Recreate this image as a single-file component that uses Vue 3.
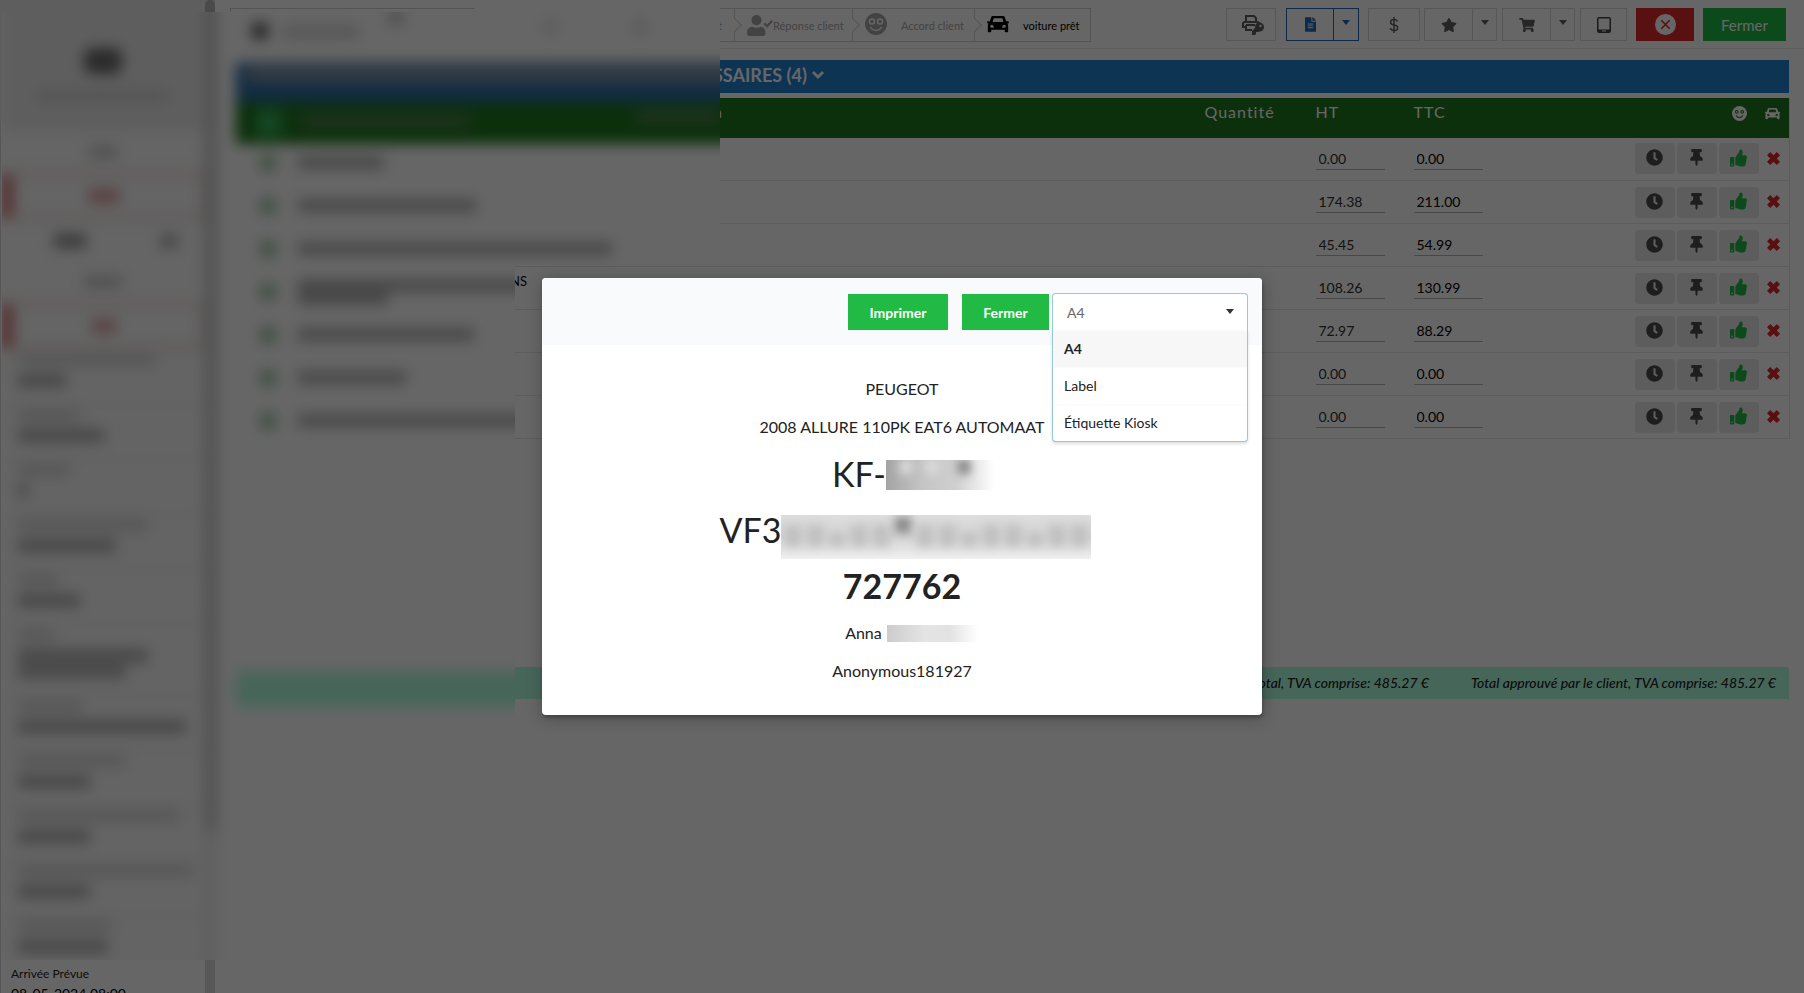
<script setup>
import { ref } from 'vue'

const icons = {
  clock: { box: '0 0 512 512', d: 'M256 8C119 8 8 119 8 256s111 248 248 248 248-111 248-248S393 8 256 8zm92.5 313l-20 25a16 16 0 0 1-22.500 2.500l-67-49.700a40 40 0 0 1-15-31.200V112a16 16 0 0 1 16-16h32a16 16 0 0 1 16 16v144l58 42.500a16 16 0 0 1 2.500 22.500z' },
  pin: { box: '0 0 384 512', d: 'M298.028 214.267L285.793 96H328c13.255 0 24-10.745 24-24V24c0-13.255-10.745-24-24-24H56C42.745 0 32 10.745 32 24v48c0 13.255 10.745 24 24 24h42.207L85.972 214.267C37.465 236.820 0 277.261 0 328c0 13.255 10.745 24 24 24h136v104.007c0 1.242.289 2.467.845 3.578l24 48c2.941 5.882 11.364 5.893 14.311 0l24-48a8.008 8.008 0 0 0 .845-3.578V352h136c13.255 0 24-10.745 24-24-.001-51.183-37.983-91.420-85.973-113.733z' },
  thumb: { box: '0 0 512 512', d: 'M104 224H24c-13.255 0-24 10.745-24 24v240c0 13.255 10.745 24 24 24h80c13.255 0 24-10.745 24-24V248c0-13.255-10.745-24-24-24zM64 472c-13.255 0-24-10.745-24-24s10.745-24 24-24 24 10.745 24 24-10.745 24-24 24zM384 81.452c0 42.416-25.970 66.208-33.277 94.548h101.723c33.397 0 59.397 27.746 59.553 58.098.084 17.938-7.546 37.249-19.439 49.197l-.11.11c9.836 23.337 8.237 56.037-9.308 79.469 8.681 25.895-.069 57.704-16.382 74.757 4.298 17.598 2.244 32.575-6.148 44.632C440.202 511.587 389.616 512 346.839 512l-2.845-.001c-48.287-.017-87.806-17.598-119.560-31.725-15.957-7.099-36.821-15.887-52.651-16.178-6.540-.120-11.783-5.457-11.783-11.998v-213.770c0-3.200 1.282-6.271 3.558-8.521 39.614-39.144 56.648-80.587 89.117-113.111 14.804-14.832 20.188-37.236 25.393-58.902C282.515 39.293 291.817 0 312 0c24 0 72 8 72 81.452z' },
  star: { box: '0 0 576 512', d: 'M259.3 17.8L194 150.2 47.9 171.5c-26.200 3.800-36.700 36.100-17.700 54.600l105.700 103-25 145.500c-4.500 26.300 23.200 46 46.400 33.700L288 439.6l130.700 68.700c23.200 12.200 50.900-7.400 46.400-33.700l-25-145.500 105.700-103c19-18.500 8.500-50.800-17.700-54.600L382 150.2 316.7 17.8c-11.700-23.600-45.600-23.900-57.400 0z' },
  cart: { box: '0 0 576 512', d: 'M528.12 301.319l47.273-208C578.806 78.301 567.391 64 551.99 64H159.208l-9.166-44.810C147.758 8.021 137.930 0 126.529 0H24C10.745 0 0 10.745 0 24v16c0 13.255 10.745 24 24 24h69.883l70.248 343.435C147.325 417.100 136 435.222 136 456c0 30.928 25.072 56 56 56s56-25.072 56-56c0-15.674-6.447-29.835-16.824-40h209.647C430.447 426.165 424 440.326 424 456c0 30.928 25.072 56 56 56s56-25.072 56-56c0-22.172-12.888-41.332-31.579-50.405l5.517-24.276c3.413-15.018-8.002-29.319-23.403-29.319H218.117l-6.545-32h293.145c11.206 0 20.920-7.754 23.403-18.681z' },
  file: { box: '0 0 384 512', d: 'M224 136V0H24C10.7 0 0 10.7 0 24v464c0 13.300 10.700 24 24 24h336c13.300 0 24-10.700 24-24V160H248c-13.200 0-24-10.800-24-24zm64 236c0 6.600-5.400 12-12 12H108c-6.600 0-12-5.400-12-12v-8c0-6.600 5.400-12 12-12h168c6.600 0 12 5.400 12 12v8zm0-64c0 6.600-5.400 12-12 12H108c-6.600 0-12-5.400-12-12v-8c0-6.600 5.400-12 12-12h168c6.600 0 12 5.400 12 12v8zm0-72v8c0 6.600-5.400 12-12 12H108c-6.600 0-12-5.400-12-12v-8c0-6.600 5.400-12 12-12h168c6.600 0 12 5.400 12 12zm96-114.100v6.100H256V0h6.100c6.400 0 12.500 2.500 17 7l97.900 98c4.500 4.500 7 10.600 7 16.900z' },
  car: { box: '0 0 24 20', d: 'M6.500 1h11c1 0 1.800.600 2.100 1.500L21 7h2.200c.500 0 .800.400.800.800v.800c0 .500-.300.800-.800.800h-.900c.700.600 1 1.300 1 2.300V18c0 .800-.500 1.300-1.300 1.300h-1.200c-.800 0-1.300-.500-1.300-1.300v-1.500h-15V18c0 .800-.500 1.300-1.300 1.300H2C1.200 19.300.700 18.800.700 18v-6.300c0-1 .300-1.700 1-2.300H.800C.300 9.400 0 9.100 0 8.600v-.8C0 7.400.300 7 .800 7H3l1.400-4.500C4.700 1.600 5.500 1 6.500 1zm.700 2.700L6 7.800h12l-1.200-4.100zM5 10.700a1.700 1.700 0 1 0 0 3.400h1.800c.600 0 .700-.600.500-1.100-.4-1.300-1.200-2.300-2.300-2.300zm14 0c-1.100 0-1.900 1-2.300 2.300-.2.500-.1 1.100.5 1.100H19a1.700 1.700 0 1 0 0-3.400z' },
  user: { box: '0 0 26 21', d: 'M9.500 0a5 5 0 0 1 0 10.200 5 5 0 0 1 0-10.200zM5 11.800c1.300.700 2.800 1 4.500 1s3.200-.3 4.500-1c2.600.400 4.300 2.200 4.300 4.800v2.400c0 1.200-.8 2-2 2H2.200C1 21 .2 20.200.2 19v-2.400c0-2.600 2.200-4.600 4.800-4.800zM16.500 9.200l1.600-1.600 2 2L24.400 5 26 6.600l-5.900 6.200z' },
  chevron: { box: '0 0 12 8', d: 'M6 8L0 2 2 0l4 4 4-4 2 2z' },
  cross: { box: '0 0 14 14', d: 'M3.500 0L7 3.500 10.500 0 14 3.500 10.500 7 14 10.500 10.500 14 7 10.500 3.500 14 0 10.500 3.500 7 0 3.500z' },
  caret: { box: '0 0 8 5', d: 'M0 0h8L4 5z' },
}

const rows = [
  ['0.00', '0.00'],
  ['174.38', '211.00'],
  ['45.45', '54.99'],
  ['108.26', '130.99'],
  ['72.97', '88.29'],
  ['0.00', '0.00'],
  ['0.00', '0.00'],
]

const lineBars = [[86], [178], [314], [240, 90], [176], [108], [240]]
const factBars = [
  [138, [48]], [62, [86]], [52, [10]], [130, [98]], [40, [62]], [36, [130, 108]],
  [64, [168]], [108, [72]], [162, [72]], [174, [72]], [94, [90]],
]

const format = ref('A4')
const formats = ['A4', 'Label', 'Étiquette Kiosk']
</script>

<template>
  <div class="app">
    <aside class="side">
      <div class="side-body">
        <div class="side-head"></div>
        <div class="side-list"></div>
        <dl class="arrival">
          <dt>Arrivée Prévue</dt>
          <dd>08-05-2024 08:00</dd>
        </dl>
      </div>
      <div class="track"><div class="thumb"></div></div>
    </aside>

    <main class="main">
      <header class="bar">
        <ol class="steps">
          <li class="step first">t</li>
          <li class="step reply">
            <svg class="ic-user" :viewBox="icons.user.box"><path :d="icons.user.d" /></svg>Réponse client
          </li>
          <li class="step gap">
            <svg class="ic-face" viewBox="0 0 22 22">
              <circle cx="11" cy="11" r="11" />
              <g fill="none" stroke="#fff" stroke-width="1.500"><circle cx="7" cy="8.500" r="2.500" /><circle cx="15" cy="8.500" r="2.500" /><path d="M5.500 14c2.500 4.500 8.500 4.500 11 0" /></g>
            </svg>Accord client
          </li>
          <li class="step gap on">
            <svg class="ic-car" :viewBox="icons.car.box"><path fill-rule="evenodd" :d="icons.car.d" /></svg>voiture prêt
          </li>
        </ol>
        <div class="tools">
          <button class="tool w50" aria-label="Imprimer la clé">
            <svg class="ic-print" viewBox="0 0 22 20">
              <g fill="none" stroke="currentColor" stroke-width="2"><path d="M4 7V1h8l2 2v4" /><path d="M4 12H1V9c0-1 .8-2 2-2h12c1.200 0 2 1 2 2" /><path d="M4 10h9M4 10v5h6" /></g>
              <circle cx="17.500" cy="12" r="4.500" /><path d="M14 12l4 4-2 1h-2v2l-1 1h-3v-4z" /><circle cx="18.500" cy="11" r="1.200" fill="#fff" />
            </svg>
          </button>
          <div class="pair blue">
            <button class="tool w48" aria-label="Document"><svg class="ic-file" :viewBox="icons.file.box"><path :d="icons.file.d" /></svg></button>
            <button class="tool w25" aria-label="Options du document"><svg class="ic-caret" :viewBox="icons.caret.box"><path :d="icons.caret.d" /></svg></button>
          </div>
          <button class="tool w52" aria-label="Paiement">
            <svg class="ic-dollar" viewBox="0 0 10 16"><path d="M8.500 4.500C8 3 6.800 2.500 5 2.500c-2 0-3.500 1-3.500 2.700C1.500 9 8.700 7 8.700 10.700c0 1.800-1.700 2.800-3.700 2.800s-3.300-.8-3.800-2.500M5 0v16" fill="none" stroke="currentColor" stroke-width="1.500" /></svg>
          </button>
          <div class="pair">
            <button class="tool w49" aria-label="Favoris"><svg class="ic-star" :viewBox="icons.star.box"><path :d="icons.star.d" /></svg></button>
            <button class="tool w25" aria-label="Options des favoris"><svg class="ic-caret" :viewBox="icons.caret.box"><path :d="icons.caret.d" /></svg></button>
          </div>
          <div class="pair">
            <button class="tool w49" aria-label="Panier"><svg class="ic-star" :viewBox="icons.cart.box"><path :d="icons.cart.d" /></svg></button>
            <button class="tool w25" aria-label="Options du panier"><svg class="ic-caret" :viewBox="icons.caret.box"><path :d="icons.caret.d" /></svg></button>
          </div>
          <button class="tool w47" aria-label="Tablette">
            <svg class="ic-tablet" viewBox="0 0 14 16"><path fill-rule="evenodd" d="M2 0h10a2 2 0 0 1 2 2v12a2 2 0 0 1-2 2H2a2 2 0 0 1-2-2V2C0 .900.900 0 2 0zm-.5 1.500v11h11v-11zm3.500 12v1h4v-1z" /></svg>
          </button>
          <button class="tool red" aria-label="Annuler">
            <svg class="ic-cancel" viewBox="0 0 20 20"><circle cx="10" cy="10" r="10" fill="#fff" /><path d="M6 6l8 8m0-8l-8 8" stroke="#db2828" stroke-width="1.500" /></svg>
          </button>
          <button class="tool green">Fermer</button>
        </div>
      </header>

      <section class="work">
        <h2 class="title">SSAIRES (4)<svg class="ic-chev" :viewBox="icons.chevron.box"><path :d="icons.chevron.d" /></svg></h2>
        <table class="lines">
          <colgroup>
            <col class="c-name" /><col class="c-desc" /><col />
            <col class="c-qty" /><col class="c-ht" /><col class="c-ttc" /><col class="c-act" /><col class="c-del" />
          </colgroup>
          <thead>
            <tr>
              <th></th><th class="end">n</th><th></th>
              <th>Quantité</th><th>HT</th><th>TTC</th>
              <th class="face">
                <svg class="ic-head" viewBox="0 0 22 22">
                  <circle cx="11" cy="11" r="11" />
                  <g fill="none" stroke="#1e781e" stroke-width="1.500"><circle cx="7" cy="8.500" r="2" /><circle cx="15" cy="8.500" r="2" /><path d="M6 14c2 4 8 4 10 0" /></g>
                </svg>
              </th>
              <th class="mid"><svg class="ic-head" :viewBox="icons.car.box"><path fill-rule="evenodd" :d="icons.car.d" /></svg></th>
            </tr>
          </thead>
          <tbody>
            <tr v-for="(r, i) in rows" :key="i">
              <td class="name">{{ i === 3 ? 'NS' : '' }}</td><td></td><td></td><td></td>
              <td><input class="amount soft" aria-label="HT" :value="r[0]" /></td>
              <td><input class="amount" aria-label="TTC" :value="r[1]" /></td>
              <td>
                <div class="acts">
                  <button class="act" aria-label="Plus tard"><svg class="ic-act" :viewBox="icons.clock.box"><path :d="icons.clock.d" /></svg></button>
                  <button class="act" aria-label="Épingler"><svg class="ic-act" :viewBox="icons.pin.box"><path :d="icons.pin.d" /></svg></button>
                  <button class="act ok" aria-label="Approuver"><svg class="ic-thumb" :viewBox="icons.thumb.box"><path :d="icons.thumb.d" /></svg></button>
                </div>
              </td>
              <td><button class="del" aria-label="Refuser"><svg class="ic-del" :viewBox="icons.cross.box"><path :d="icons.cross.d" /></svg></button></td>
            </tr>
          </tbody>
        </table>
        <footer class="totals">
          <span>Total, TVA comprise: 485.27 €</span>
          <span>Total approuvé par le client, TVA comprise: 485.27 €</span>
        </footer>
      </section>
    </main>

    <!-- Private details, kept unreadable -->
    <div class="veil" aria-hidden="true">
      <div class="veil-in">
        <div class="v-side">
          <div class="v-head"><i class="v-logo"></i><i class="v-sub"></i></div>
          <div class="v-item"><i class="v-a"></i></div>
          <div class="v-item alert"><i class="v-b"></i></div>
          <div class="v-item split"><i class="v-c"></i><i class="v-d"></i></div>
          <div class="v-item"><i class="v-e"></i></div>
          <div class="v-item alert"><i class="v-f"></i></div>
          <div class="v-fact" v-for="(f, i) in factBars" :key="i">
            <i class="v-label" :style="{ width: f[0] + 'px' }"></i>
            <i v-for="(w, j) in f[1]" :key="j" class="v-value" :style="{ width: w + 'px' }"></i>
          </div>
        </div>
        <div class="v-track"><div class="v-thumb"></div></div>
        <div class="v-main">
          <div class="v-steps"><i class="v-dot"></i><i class="v-step"></i><i class="v-mark"></i><i class="v-mark faint"></i><i class="v-mark faint"></i></div>
          <div class="v-title"><i></i></div>
          <div class="v-thead"><i class="v-box"></i><i class="v-th1"></i><i class="v-th2"></i></div>
          <div class="v-row" v-for="(b, i) in lineBars" :key="i">
            <i class="v-check"></i>
            <div class="v-text"><i v-for="(w, j) in b" :key="j" class="v-line" :style="{ width: w + 'px' }"></i></div>
          </div>
          <div class="v-total"></div>
        </div>
      </div>
    </div>

    <div class="dim">
      <div class="modal" role="dialog" aria-label="Imprimer">
        <div class="modal-head">
          <button class="btn print">Imprimer</button>
          <button class="btn close">Fermer</button>
          <div class="picker">
            <select v-model="format" class="select" aria-label="Format">
              <option v-for="f in formats" :key="f">{{ f }}</option>
            </select>
            <svg class="ic-select" :viewBox="icons.caret.box"><path :d="icons.caret.d" /></svg>
            <ul class="menu">
              <li v-for="f in formats" :key="f" class="opt" :class="{ sel: f === format }" @click="format = f">{{ f }}</li>
            </ul>
          </div>
        </div>
        <div class="label">
          <p>PEUGEOT</p>
          <p>2008 ALLURE 110PK EAT6 AUTOMAAT</p>
          <p class="big plate">KF-<span class="mask m-plate"><i></i><i></i><i></i></span></p>
          <p class="big vin">VF3<span class="mask m-vin"><i v-for="n in 14" :key="n"></i></span></p>
          <p class="big strong">727762</p>
          <p class="owner">Anna <span class="mask m-name"></span></p>
          <p>Anonymous181927</p>
        </div>
      </div>
    </div>
  </div>
</template>

<style>
body { margin: 0; overflow: hidden; }
</style>

<style scoped>
* { box-sizing: border-box; }
.app { position: relative; display: flex; height: 100vh; overflow: hidden; background: #fff; color: #222; font: 14px/20px Lato, "Noto Sans", sans-serif; }
button, input, select { font-family: inherit; margin: 0; }
button { cursor: pointer; }
svg { fill: currentColor; display: block; flex: none; }

.side { display: flex; width: 215px; flex: none; height: 100vh; overflow: hidden; }
.side-body { width: 205px; display: flex; flex-direction: column; }
.side-head { height: 121px; background: #ebebeb; flex: none; }
.side-list { height: calc(100vh - 154px); border-left: 1px solid #d8d8d8; flex: none; }
.arrival { margin: 0; padding: 4px 0 0 10px; border-left: 1px solid #d8d8d8; height: 60px; flex: none; }
.arrival dt { font-size: 12px; line-height: 20px; }
.arrival dd { margin: 0; font-size: 14px; line-height: 20px; color: #000; }
.track { width: 10px; background: #dcdcdc; }
.thumb { height: 830px; border-radius: 5px; background: #b8b8b8; }

.main { flex: 1; min-width: 0; }
.bar { height: 49px; border-bottom: 1px solid #e6e6e6; display: flex; justify-content: space-between; align-items: flex-start; padding: 8px 18px 0 15px; }
.steps { display: flex; list-style: none; margin: 0; padding: 0; border: 1px solid #d2d2d2; height: 34px; width: 861px; flex: none; }
.step { position: relative; display: flex; align-items: center; width: 122px; padding: 2px 0 0 12px; font-size: 11px; color: #a8a8a8; border-left: 1px solid #d2d2d2; white-space: nowrap; }
.step.first { flex: 1; justify-content: flex-end; padding-right: 12px; border: 0; }
.step:not(.first)::before { content: ""; position: absolute; left: -5px; top: 11px; width: 9px; height: 9px; border: solid #d2d2d2; border-width: 1px 1px 0 0; background: #fff; transform: rotate(45deg); }
.step.gap { gap: 14px; }
.step.reply { width: 118px; }
.step.on { width: 116px; color: #000; }
.ic-user { width: 26px; height: 21px; margin-bottom: 2px; }
.ic-face { width: 22px; height: 22px; margin-bottom: 4px; }
.ic-car { width: 22px; height: 18px; margin-bottom: 4px; }

.tools { display: flex; align-items: flex-start; }
.tool { height: 33px; padding: 0; display: flex; align-items: center; justify-content: center; background: #fff; color: #606060; border: 1px solid #dadada; border-radius: 0; }
.pair { display: flex; }
.pair .tool + .tool { border-left: 0; }
.blue .tool { color: #2b67b5; border-color: #2b67b5; }
.w50 { width: 50px; margin-right: 10px; padding-left: 4px; }
.w48 { width: 48px; }
.w25 { width: 25px; margin-right: 9px; }
.tools > .pair:not(.blue) .w25 { margin-right: 5px; width: 24px; }
.w52 { width: 52px; margin-right: 4px; }
.w49 { width: 49px; }
.w47 { width: 47px; margin-right: 9px; color: #444; }
.red { width: 58px; margin-right: 9px; background: #db2828; border-color: #db2828; }
.green { width: 83px; background: #21ba45; border-color: #21ba45; color: #fff; font-size: 15px; }
.ic-print { width: 22px; height: 20px; }
.ic-file { width: 11px; height: 15px; }
.ic-caret { width: 8px; height: 5px; margin-bottom: 4px; }
.ic-dollar { width: 10px; height: 16px; }
.ic-star { width: 16px; height: 14px; }
.ic-tablet { width: 14px; height: 16px; }
.ic-cancel { width: 21px; height: 21px; }

.work { padding: 11px 14px 0 21px; }
.title { display: flex; align-items: center; gap: 5px; height: 33px; margin: 0 1px 5px 0; padding: 0 0 3px 477px; background: #2185d0; color: #fff; font-size: 18px; line-height: 24px; font-weight: 700; }
.ic-chev { width: 12px; height: 8px; }

.lines { width: 100%; table-layout: fixed; border-collapse: collapse; border-right: 1px solid #e4e4e4; }
.c-name { width: 291px; }
.c-desc { width: 196px; }
.c-qty { width: 111px; }
.c-ht { width: 98px; }
.c-ttc { width: 221px; }
.c-act { width: 126px; }
.c-del { width: 29px; }
.lines th { height: 40px; padding: 4px 0 0; background: #1e781e; color: #fff; font-size: 16px; line-height: 20px; font-weight: 400; letter-spacing: 1px; text-align: left; vertical-align: top; }
.lines th.end { text-align: right; }
.lines th.face { padding: 8px 0 0 97px; }
.lines th.mid { padding: 8px 0 0 4px; }
.ic-head { width: 15px; height: 15px; }
.lines td { height: 43px; padding: 0; border-bottom: 1px solid #e6e6e6; vertical-align: top; }
.lines tbody tr:first-child td { height: 42px; }
.lines td.name { text-align: right; color: #000; padding-top: 4px; font-size: 13px; }
.amount { display: block; width: 69px; height: 22px; margin-top: 10px; padding: 0 3px; border: 0; border-bottom: 1px solid #b4b4b4; background: none; font-size: 14px; color: #000; }
.amount.soft { color: #303030; }
.acts { display: flex; gap: 2px; padding-top: 6px; }
.lines tbody tr:first-child .acts { padding-top: 5px; }
.act { width: 40px; height: 31px; padding: 0 0 2px; display: flex; align-items: center; justify-content: center; border: 0; border-radius: 4px; background: #e8e8e8; color: #4d4d4d; }
.act.ok { color: #21ba45; }
.ic-act { width: 17px; height: 17px; }
.ic-thumb { width: 17px; height: 18px; }
.del { padding: 0 0 0 6px; margin-top: 14px; border: 0; background: none; color: #db2828; }
.ic-del { width: 13px; height: 13px; }

.totals { display: flex; justify-content: flex-end; gap: 42px; margin: 228px 1px 0 0; padding: 0 13px; height: 32px; align-items: center; background: #b0ffe0; font-size: 14px; font-style: italic; font-weight: 500; white-space: nowrap; }

.veil { position: absolute; inset: 0 auto 33px 0; width: 720px; overflow: hidden; background: #fff; clip-path: polygon(2px 12px, 475px 12px, 475px 4px, 720px 4px, 720px 265px, 515px 265px, 515px 100%, 2px 100%); }
.veil-in { display: flex; width: 760px; height: 100vh; filter: blur(7px); }
.veil i { display: block; }
.v-side { width: 205px; flex: none; background: #fafafa; }
.v-head { height: 131px; background: #ebebeb; padding-top: 48px; }
.v-logo { width: 38px; height: 26px; margin: 0 auto 16px; border-radius: 8px; background: #6c6c6c; }
.v-sub { width: 130px; height: 12px; margin: 0 auto; background: #d4d4d4; }
.v-item { height: 41px; display: flex; align-items: center; justify-content: center; background: #fcfcfc; }
.v-item.alert { height: 48px; border: 5px solid #ecdcd8; border-left: 14px solid #d88080; padding-right: 6px; }
.v-item.split { justify-content: space-between; padding: 0 27px 0 54px; }
.v-a { width: 28px; height: 12px; background: #c8c8c8; }
.v-b { width: 32px; height: 14px; background: #e0a0a0; }
.v-c { width: 32px; height: 14px; background: #909090; }
.v-d { width: 18px; height: 14px; background: #b4b4b4; }
.v-e { width: 38px; height: 12px; background: #c8c8c8; }
.v-f { width: 24px; height: 14px; background: #e0a0a0; }
.v-fact { padding: 3px 0 0 18px; border-bottom: 1px solid #d8d8d8; }
.v-label { height: 12px; margin: 1px 0 8px; background: #d8d8d8; }
.v-value { height: 13px; margin-bottom: 3px; background: #b0b0b0; }
.v-value:last-child { margin-bottom: 17px; }
.v-track { width: 12px; flex: none; background: #ececec; }
.v-thumb { height: 830px; background: #cacaca; }
.v-main { flex: 1; padding-left: 19px; }
.v-steps { height: 63px; display: flex; align-items: flex-start; padding: 22px 0 0 15px; }
.v-dot { width: 18px; height: 18px; border-radius: 9px; background: #585858; }
.v-step { width: 76px; height: 12px; margin: 4px 30px 0 14px; background: #d4d4d4; }
.v-mark { width: 14px; height: 14px; margin: -12px 140px 0 0; background: #c0c0c0; }
.v-mark.faint { margin: -2px 76px 0 0; background: #e4e4e4; }
.v-title { height: 39px; padding: 4px 10px; background: #2a6ca8; }
.v-title i { height: 16px; background: #8094a8; }
.v-thead { display: flex; align-items: flex-start; height: 42px; padding: 8px 0 0 20px; background: #1e781e; }
.v-box { width: 26px; height: 26px; background: #36b058; }
.v-th1 { width: 170px; height: 14px; margin: 4px 166px 0 18px; background: #4c7c4c; }
.v-th2 { width: 84px; height: 14px; background: #4c7c4c; }
.v-row { height: 43px; display: flex; align-items: center; padding: 0 0 6px 24px; }
.v-check { width: 16px; height: 16px; margin-right: 22px; background: #a0c8a4; }
.v-text { display: flex; flex-direction: column; }
.v-line { height: 13px; background: #b4b4b4; }
.v-total { height: 36px; margin-top: 226px; background: #b0ffe0; }

.dim { position: absolute; inset: 0; display: flex; align-items: center; justify-content: center; background: rgba(0, 0, 0, 0.6); }
.modal { width: 720px; background: #fff; border-radius: 4px; box-shadow: 1px 3px 3px rgba(0, 0, 0, 0.2), 1px 3px 15px 2px rgba(0, 0, 0, 0.2); }
.modal-head { height: 67px; display: flex; justify-content: flex-end; padding: 15px 14px 0 0; background: #f9fafc; border-radius: 4px 4px 0 0; }
.btn { height: 36px; padding: 0; border: 0; background: #21ba45; color: #fff; font-size: 14px; font-weight: 700; margin-top: 1px; }
.print { width: 100px; margin-right: 14px; }
.close { width: 87px; margin-right: 3px; }
.picker { position: relative; width: 196px; height: 37px; }
.select { width: 100%; height: 37px; padding: 0 14px; appearance: none; border: 1px solid #96c8da; border-bottom: 0; border-radius: 4px 4px 0 0; background: #fff; color: #666; font-size: 14px; outline: none; }
.ic-select { position: absolute; right: 14px; top: 16px; width: 8px; height: 5px; color: #333; pointer-events: none; }
.menu { position: absolute; left: 0; right: 0; top: 37px; margin: 0; padding: 0; list-style: none; background: #fff; border: 1px solid #96c8da; border-top: 0; border-radius: 0 0 4px 4px; box-shadow: 0 2px 3px rgba(34, 36, 38, 0.15); }
.opt { height: 37px; padding: 8px 11px; border-top: 1px solid #fafafa; font-size: 14px; line-height: 20px; color: #222; }
.opt.sel { background: #f7f7f7; font-weight: 700; }
.label { padding: 32px 0; text-align: center; }
.label p { margin: 0 0 14px; font-size: 16px; line-height: 24px; }
.label p:last-child { margin: 0; }
.label .big { font-size: 34px; line-height: 42px; }
.label .strong { font-weight: 700; }
.label .plate, .label .vin, .label .owner { display: flex; justify-content: center; align-items: center; white-space: pre; }
.label .plate { padding-left: 32px; }
.label .vin { padding-left: 7px; }
.label .owner { padding-left: 24px; }
.mask { display: flex; overflow: hidden; background: #fff; }
.mask i { display: block; flex: none; filter: blur(5px); }
.m-plate { width: 118px; height: 30px; margin-top: 2px; background: linear-gradient(90deg, #a4a4a4, #c4c4c4 30%, #d0d0d0 60%, #fff 92%); }
.m-plate i { width: 12px; height: 14px; margin-left: 14px; background: #dcdcdc; }
.m-plate i:last-child { margin-left: 20px; background: #808080; }
.m-vin { width: 310px; height: 44px; margin: 6px 0 -8px; padding: 10px 4px; gap: 6px; background: linear-gradient(#dedede, #d4d4d4 50%, #f0f0f0); }
.m-vin i { width: 16px; height: 22px; background: #c0c0c0; }
.m-vin i:nth-child(3n) { height: 14px; margin-top: 8px; }
.m-vin i:nth-child(6) { height: 16px; margin-top: -8px; background: #888; }
.m-name { width: 96px; height: 17px; margin-left: 1px; background: linear-gradient(90deg, #ccc, #e4e4e4 40%, #e2e2e2 65%, #fff 95%); }
</style>
